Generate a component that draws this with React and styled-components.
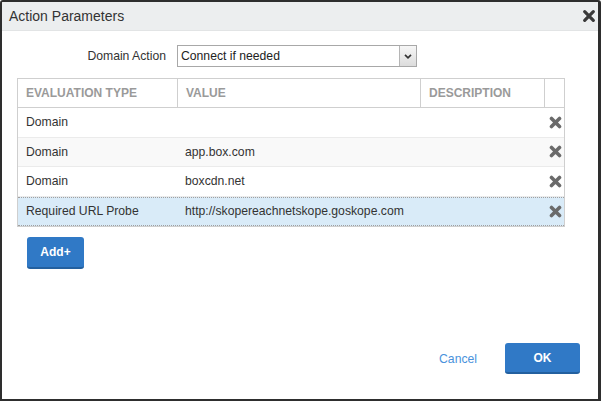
import React from "react";
import styled, { createGlobalStyle } from "styled-components";

const Global = createGlobalStyle`
  html, body { margin: 0; padding: 0; background: #fff; }
  body { font-family: "Liberation Sans", Arial, sans-serif; }
  * { box-sizing: border-box; }
`;

const Window = styled.div`
  width: 601px;
  height: 401px;
  border: 2px solid #2e2e2e;
  border-right-width: 3px;
  border-radius: 3px 3px 0 0;
  background: #fff;
  display: flex;
  flex-direction: column;
  overflow: hidden;
`;

const TitleBar = styled.div`
  height: 29px;
  flex: none;
  background: #eceeef;
  border-bottom: 1px solid #e2e4e5;
  display: flex;
  align-items: center;
  justify-content: space-between;
  padding: 0 1px 0 7px;
`;

const Title = styled.span`
  font-size: 14px;
  color: #333;
`;

const CloseBtn = styled.button`
  border: 0;
  background: none;
  padding: 0;
  width: 16px;
  height: 16px;
  display: flex;
  align-items: center;
  justify-content: center;
  cursor: pointer;
`;

const Body = styled.div`
  flex: 1;
  display: flex;
  flex-direction: column;
  padding: 14px 34px 25px 15px;
`;

const ActionRow = styled.div`
  display: flex;
  align-items: center;
  height: 22px;
`;

const Label = styled.label`
  width: 149px;
  text-align: right;
  font-size: 12.2px;
  color: #333;
  margin-right: 11px;
`;

const Select = styled.div`
  width: 240px;
  height: 22px;
  border: 1px solid #a8a8a8;
  display: flex;
  align-items: stretch;
  font-size: 12.2px;
  color: #222;
`;

const SelectText = styled.span`
  flex: 1;
  display: flex;
  align-items: center;
  padding-left: 3px;
`;

const SelectArrow = styled.span`
  width: 17px;
  border-left: 1px solid #b5b5b5;
  background: linear-gradient(#f6f6f6, #dcdcdc);
  display: flex;
  align-items: center;
  justify-content: center;
`;

const Table = styled.div`
  margin-top: 11px;
  width: 548px;
  border: 1px solid #cfcfcf;
  display: flex;
  flex-direction: column;
`;

const cols = "159px 243px 124px 1fr";

const HeadRow = styled.div`
  display: grid;
  grid-template-columns: ${cols};
  height: 29px;
  border-bottom: 1px solid #cfcfcf;
`;

const HeadCell = styled.div`
  display: flex;
  align-items: center;
  padding-left: 8px;
  font-size: 12px;
  font-weight: bold;
  color: #9a9a9a;
  border-left: ${(p) => (p.$first ? "0" : "1px solid #cfcfcf")};
`;

const Row = styled.div`
  display: grid;
  grid-template-columns: ${cols};
  height: 29.5px;
  background: ${(p) => (p.$selected ? "#d9ebf8" : p.$alt ? "#f9f9f9" : "#fff")};
  border-top: ${(p) => (p.$selected ? "1px dotted #a0a0a0" : "0")};
  border-bottom: ${(p) =>
    p.$selected ? "1px dotted #a0a0a0" : p.$last ? "0" : "1px solid #ebebeb"};
  font-size: 12.2px;
  color: #333;
`;

const Cell = styled.div`
  display: flex;
  align-items: center;
  padding-left: 8px;
  white-space: nowrap;
`;

const IconCell = styled.div`
  display: flex;
  align-items: center;
  justify-content: center;
  padding-left: 2px;
`;

const AddButton = styled.button`
  margin-top: 10px;
  margin-left: 10px;
  align-self: flex-start;
  width: 57px;
  height: 32px;
  border: 0;
  border-bottom: 2px solid #23609f;
  border-radius: 3px;
  background: #3079c6;
  color: #fff;
  font-family: "Liberation Sans", Arial, sans-serif;
  font-size: 12px;
  font-weight: bold;
  cursor: pointer;
`;

const Footer = styled.div`
  margin-top: auto;
  display: flex;
  justify-content: flex-end;
  align-items: center;
  gap: 28px;
  margin-right: -16px;
`;

const LinkButton = styled.button`
  border: 0;
  background: none;
  padding: 0;
  color: #4a92dc;
  font-family: "Liberation Sans", Arial, sans-serif;
  font-size: 12.2px;
  cursor: pointer;
`;

const PrimaryButton = styled.button`
  width: 75px;
  height: 31px;
  border: 0;
  border-bottom: 2px solid #23609f;
  border-radius: 3px;
  background: #3079c6;
  color: #fff;
  font-family: "Liberation Sans", Arial, sans-serif;
  font-size: 12px;
  font-weight: bold;
  cursor: pointer;
`;

const XIcon = ({ size = 13, color = "#6a6a6a", w = 3.6 }) => (
  <svg width={size} height={size} viewBox="0 0 13 13">
    <path
      d="M2.5 2.5 L10.5 10.5 M10.5 2.5 L2.5 10.5"
      stroke={color}
      strokeWidth={w}
      strokeLinecap="round"
    />
  </svg>
);

const rows = [
  { type: "Domain", value: "" },
  { type: "Domain", value: "app.box.com" },
  { type: "Domain", value: "boxcdn.net" },
  { type: "Required URL Probe", value: "http://skopereachnetskope.goskope.com" },
];

export default function App() {
  return (
    <>
      <Global />
      <Window>
        <TitleBar>
          <Title>Action Parameters</Title>
          <CloseBtn aria-label="Close">
            <XIcon size={14} color="#3a3a3a" w={3} />
          </CloseBtn>
        </TitleBar>
        <Body>
          <ActionRow>
            <Label>Domain Action</Label>
            <Select>
              <SelectText>Connect if needed</SelectText>
              <SelectArrow>
                <svg width="8" height="5" viewBox="0 0 8 5">
                  <path d="M1 0.8 L4 3.8 L7 0.8" stroke="#333" strokeWidth="1.7" fill="none" />
                </svg>
              </SelectArrow>
            </Select>
          </ActionRow>
          <Table>
            <HeadRow>
              <HeadCell $first>EVALUATION TYPE</HeadCell>
              <HeadCell>VALUE</HeadCell>
              <HeadCell>DESCRIPTION</HeadCell>
              <HeadCell />
            </HeadRow>
            {rows.map((r, i) => (
              <Row
                key={i}
                $alt={i === 1}
                $selected={i === 3}
                $last={i === rows.length - 1}
              >
                <Cell>{r.type}</Cell>
                <Cell>{r.value}</Cell>
                <Cell />
                <IconCell>
                  <XIcon />
                </IconCell>
              </Row>
            ))}
          </Table>
          <AddButton>Add+</AddButton>
          <Footer>
            <LinkButton>Cancel</LinkButton>
            <PrimaryButton>OK</PrimaryButton>
          </Footer>
        </Body>
      </Window>
    </>
  );
}
